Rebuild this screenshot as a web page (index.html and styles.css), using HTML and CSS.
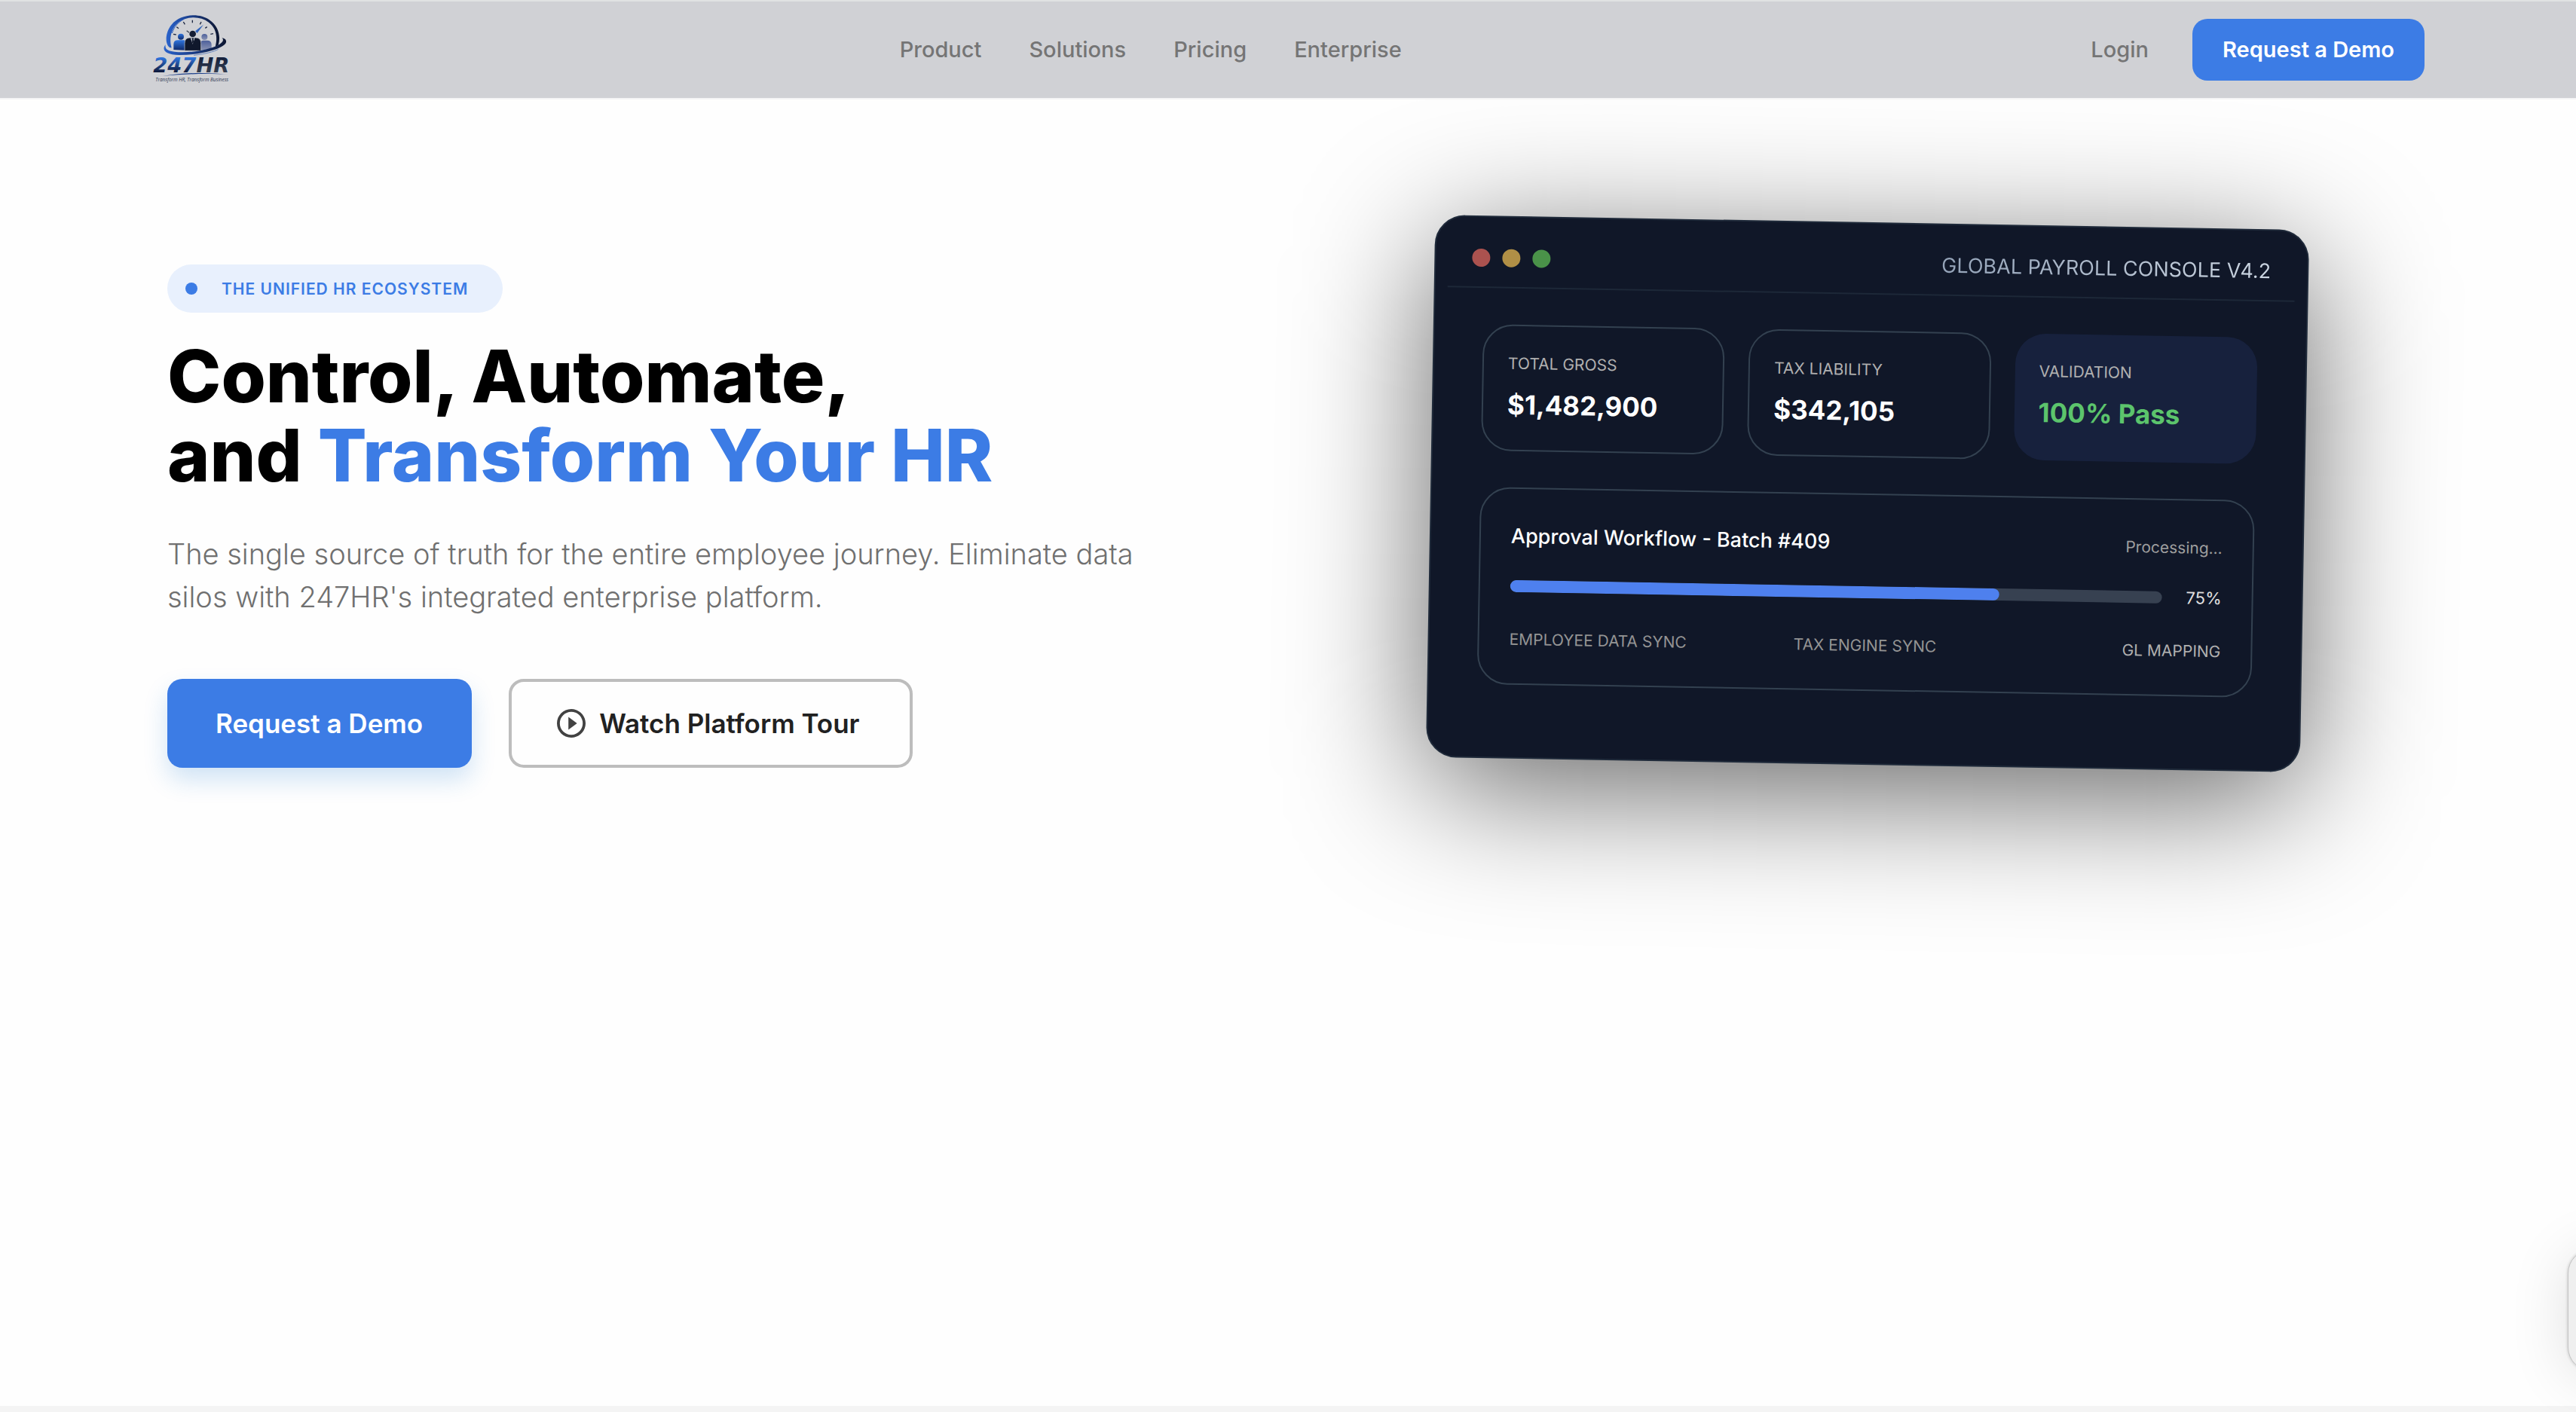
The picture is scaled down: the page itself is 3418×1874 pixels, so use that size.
FILE: index.html
```html
<!DOCTYPE html>
<html lang="en">
<head>
<meta charset="utf-8">
<meta name="viewport" content="width=device-width, initial-scale=1">
<title>247HR</title>
<link rel="stylesheet" href="styles.css">
</head>
<body>
<header class="site-header">
  <div class="site-header__inner">
    <a class="logo" href="#" aria-label="247HR home">
      <svg class="logo__art" viewBox="60 54 312 288" aria-hidden="true">
        <defs>
          <linearGradient id="domeFill" x1="0" y1="0" x2="1" y2="0">
            <stop offset="0" stop-color="#2a63cc"/><stop offset=".45" stop-color="#1b3f8c"/><stop offset="1" stop-color="#0c1530"/>
          </linearGradient>
          <linearGradient id="blueFill" x1="0" y1="0" x2="0" y2="1">
            <stop offset="0" stop-color="#2f74dd"/><stop offset="1" stop-color="#0f2a6b"/>
          </linearGradient>
          <linearGradient id="wordFill" x1="0" y1="0" x2="0" y2="1">
            <stop offset=".2" stop-color="#2f74dd"/><stop offset=".8" stop-color="#0e1a3c"/>
          </linearGradient>
          <linearGradient id="inkFill" x1="0" y1="0" x2="0" y2="1">
            <stop offset="0" stop-color="#0b1736"/><stop offset="1" stop-color="#3d4656"/>
          </linearGradient>
          <linearGradient id="greyFill" x1="0" y1="0" x2="0" y2="1">
            <stop offset="0" stop-color="#4c5f9b"/><stop offset="1" stop-color="#8b94b4"/>
          </linearGradient>
        </defs>
        <path fill="url(#domeFill)" d="M134 190C112 178 114 128 140 98C172 58 246 48 292 80C324 102 338 142 326 180L314 186C324 148 318 112 288 89C252 62 198 64 164 92C136 116 130 160 140 190Z"/>
        <path fill="none" stroke="#2c5fc0" stroke-width="3" d="M142 132C150 106 166 88 190 76"/>
        <g stroke="#1c2742" stroke-width="4" fill="none">
          <path d="M223 80V91M187 87L193 97M160 107L168 113M147 136L158 138M258 87L253 97M281 107L274 112M295 136L306 134"/>
          <path stroke="#3d4656" d="M200 122L210 130"/>
        </g>
        <path fill="#2f63bb" d="M267 98L242 132L234 124Z"/>
        <circle cx="177" cy="146" r="12" fill="url(#blueFill)"/>
        <path fill="url(#blueFill)" d="M148 198V176Q148 160 166 160H188Q196 160 196 172V200Z"/>
        <circle cx="271" cy="147" r="12" fill="url(#greyFill)"/>
        <path fill="url(#greyFill)" d="M254 200V172Q256 161 266 161H282Q299 161 299 178V194Z"/>
        <circle cx="224" cy="135" r="13" fill="#141d33"/>
        <path fill="#10182c" stroke="#d0d1d5" stroke-width="2" d="M192 202V172Q192 150 214 150H236Q257 150 257 172V202Z"/>
        <path fill="#c9ced8" d="M215 150L224 176L233 150L226 154H222Z"/>
        <path fill="#10182c" d="M222 153H227L228 168L224 174L221 168Z"/>
        <path fill="url(#domeFill)" d="M116 178C100 196 112 218 170 219C246 220 350 196 357 168C359 158 350 152 340 151C350 158 344 170 326 179C280 202 200 212 152 206C126 203 112 196 116 178Z"/>
        <path fill="none" stroke="#3460b5" stroke-width="2" d="M228 220C268 216 310 206 326 196"/>
        <text class="logo__word" x="67" y="287" fill="url(#wordFill)">247<tspan fill="url(#inkFill)">HR</tspan></text>
        <path fill="#1c3f8a" d="M104 303C190 288 290 288 369 297C290 292 190 294 104 303Z"/>
        <text class="logo__tag" x="76" y="325">Transform HR, Transform Business</text>
      </svg>
    </a>
    <nav class="nav" aria-label="Main">
      <a class="nav__link" href="#">Product</a>
      <a class="nav__link" href="#">Solutions</a>
      <a class="nav__link" href="#">Pricing</a>
      <a class="nav__link" href="#">Enterprise</a>
    </nav>
    <div class="actions">
      <a class="nav__link actions__login" href="#">Login</a>
      <button class="btn btn--small" type="button">Request a Demo</button>
    </div>
  </div>
</header>

<main class="main">
  <section class="hero">
    <div class="hero__copy">
      <p class="pill"><span class="pill__dot"></span>THE UNIFIED HR ECOSYSTEM</p>
      <h1 class="hero__title">Control, Automate,<br>and <span class="hero__accent">Transform Your HR</span></h1>
      <p class="hero__lead">The single source of truth for the entire employee journey. Eliminate data silos with 247HR's integrated enterprise platform.</p>
      <div class="hero__buttons">
        <button class="btn btn--large" type="button">Request a Demo</button>
        <button class="btn btn--outline" type="button">
          <svg class="btn__icon" viewBox="2 2 20 20" aria-hidden="true"><path fill="currentColor" d="M12 2C6.48 2 2 6.480 2 12s4.480 10 10 10 10-4.480 10-10S17.520 2 12 2zm0 18c-4.410 0-8-3.590-8-8s3.590-8 8-8 8 3.590 8 8-3.590 8-8 8zM10 16.500l6-4.500-6-4.500z"/></svg>
          Watch Platform Tour
        </button>
      </div>
    </div>

    <div class="showcase">
      <div class="console">
        <div class="console__bar">
          <span class="console__lights"><i class="light light--red"></i><i class="light light--amber"></i><i class="light light--green"></i></span>
          <span class="console__name">GLOBAL PAYROLL CONSOLE V4.2</span>
        </div>
        <div class="console__body">
          <div class="stats">
            <div class="stat"><span class="stat__label">TOTAL GROSS</span><strong class="stat__value">$1,482,900</strong></div>
            <div class="stat"><span class="stat__label">TAX LIABILITY</span><strong class="stat__value">$342,105</strong></div>
            <div class="stat stat--ok"><span class="stat__label">VALIDATION</span><strong class="stat__value">100% Pass</strong></div>
          </div>
          <div class="flow">
            <div class="flow__head"><span class="flow__title">Approval Workflow - Batch #409</span><span class="flow__state">Processing...</span></div>
            <div class="flow__progress">
              <div class="track" role="progressbar" aria-label="Approval Workflow" aria-valuenow="75" aria-valuemin="0" aria-valuemax="100"><div class="track__fill" style="width:75%"></div></div>
              <span class="flow__percent">75%</span>
            </div>
            <div class="flow__steps"><span>EMPLOYEE DATA SYNC</span><span>TAX ENGINE SYNC</span><span>GL MAPPING</span></div>
          </div>
        </div>
      </div>
    </div>
  </section>
</main>
<div class="next-section"></div>
<button class="side-tab" type="button" aria-label="Open panel"></button>
</body>
</html>
```
FILE: styles.css
```css
* { box-sizing: border-box; }

body {
  margin: 0;
  min-height: 100vh;
  display: flex;
  flex-direction: column;
  overflow-x: hidden;
  background: #fefefe;
  color: #000;
  font-family: Inter, "Liberation Sans", sans-serif;
}

p, h1 { margin: 0; }
button { font-family: inherit; cursor: pointer; }

/* Header */
.site-header {
  position: relative;
  z-index: 1;
  border-top: 2px solid #e0e2e2;
  border-bottom: 2px solid #f4f4f5;
  background: #d0d1d5;
}
.site-header__inner {
  max-width: 3016px;
  height: 128px;
  margin: 0 auto;
  display: flex;
  align-items: center;
  justify-content: space-between;
}
.logo { display: flex; }
.logo__art { width: 104px; height: 96px; }
.logo__word { font: italic 700 82px "DejaVu Sans", sans-serif; }
.logo__tag { font: italic 400 19px "Open Sans", sans-serif; fill: #2a3550; }
.nav { display: flex; gap: 63px; }
.nav__link {
  color: #757575;
  font-size: 29px;
  font-weight: 500;
  line-height: 48px;
  text-decoration: none;
}
.actions { display: flex; align-items: center; gap: 32px; }
.actions__login { padding: 0 26px; }

.btn {
  border: 0;
  border-radius: 20px;
  background: #3c7ce5;
  color: #fff;
  font-weight: 600;
  white-space: nowrap;
}
.btn--small { padding: 17px 40px; font-size: 29px; line-height: 48px; }
.btn--large, .btn--outline { height: 118px; font-size: 35px; }
.btn--large { padding: 0 65px 0 64px; box-shadow: 0 16px 32px rgba(25, 118, 210, .2); }
.btn--outline {
  display: flex;
  align-items: center;
  gap: 18px;
  padding: 0 66px 0 60px;
  border: 4px solid #bdbdbd;
  background: transparent;
  color: #212121;
}
.btn__icon { width: 38px; height: 38px; color: #424242; }

/* Hero */
.main { min-height: calc(100vh - 140px); }
.hero {
  max-width: 2974px;
  margin: 0 auto;
  padding-top: 163px;
  display: grid;
  grid-template-columns: 1fr 1fr;
  gap: 100px;
  align-items: start;
}
.hero__copy { padding-top: 56px; }
.pill {
  display: inline-flex;
  align-items: center;
  gap: 32px;
  height: 64px;
  padding: 0 46px 0 24px;
  border-radius: 32px;
  background: #e8f0fd;
  color: #3c7ce5;
  font-size: 21px;
  font-weight: 600;
  letter-spacing: 1px;
  vertical-align: top;
}
.pill__dot { width: 16px; height: 16px; border-radius: 50%; background: #3c7ce5; }
.hero__title {
  margin-top: 32px;
  font-size: 96px;
  font-weight: 800;
  line-height: 105px;
}
.hero__accent { color: #3c7ce5; }
.hero__lead {
  max-width: 1320px;
  margin-top: 50px;
  color: #707070;
  font-size: 38px;
  font-weight: 350;
  line-height: 57px;
}
.hero__buttons { display: flex; gap: 49px; margin-top: 80px; }

/* Console card, tilted together with its soft shadow */
.showcase {
  position: relative;
  width: 1160px;
  justify-self: center;
  transform: rotate(1deg);
}
.showcase::before {
  content: "";
  position: absolute;
  inset: 38px 0 -38px;
  border-radius: 40px;
  background: rgba(0, 0, 0, .6);
  filter: blur(90px);
}
.console {
  position: relative;
  padding: 16px 16px 48px;
  border: 2px solid #1f2a3a;
  border-radius: 40px;
  background: #101728;
}
.console__bar {
  height: 78px;
  padding: 0 32px;
  display: flex;
  align-items: center;
  justify-content: space-between;
  border-bottom: 2px solid #1d2838;
}
.console__lights { display: flex; gap: 16px; }
.light { width: 24px; height: 24px; border-radius: 50%; }
.light--red { background: #ab524f; }
.light--amber { background: #b08f46; }
.light--green { background: #4a9249; }
.console__name {
  font-size: 27px;
  line-height: 40px;
  background: linear-gradient(90deg, #94a3b8, #cbd5e1);
  background-clip: text;
  -webkit-background-clip: text;
  color: transparent;
}
.console__body { padding: 48px; display: grid; gap: 48px; }
.stats { display: grid; grid-template-columns: repeat(3, 1fr); gap: 32px; }
.stat {
  display: flex;
  flex-direction: column;
  gap: 8px;
  padding: 32px;
  border: 2px solid #334150;
  border-radius: 40px;
}
.stat__label { color: #b0b0b0; font-size: 21px; line-height: 36px; }
.stat__value { color: #fff; font-size: 35px; font-weight: 700; line-height: 56px; }
.stat--ok { border: 0; background: #17213d; }
.stat--ok .stat__value { color: #5cc46c; }
.flow { padding: 40px; border: 2px solid #334150; border-radius: 40px; }
.flow__head, .flow__progress { display: flex; align-items: center; justify-content: space-between; }
.flow__title { color: #fff; font-size: 27px; font-weight: 500; line-height: 46px; }
.flow__state { color: #9e9e9e; font-size: 21px; line-height: 36px; }
.flow__progress { margin-top: 24px; gap: 32px; }
.track { flex: 1; height: 16px; border-radius: 8px; background: #374151; overflow: hidden; }
.track__fill { height: 100%; border-radius: 8px; background: #4e80ee; }
.flow__percent { color: #e0e0e0; font-size: 22px; line-height: 38px; }
.flow__steps {
  margin-top: 34px;
  display: grid;
  grid-template-columns: repeat(3, 1fr);
  color: #949494;
  font-size: 21px;
  line-height: 36px;
}
.flow__steps span:nth-child(2) { text-align: center; }
.flow__steps span:nth-child(3) { text-align: right; color: #b0b0b0; }

.next-section { flex: 1; min-height: 8px; background: #f4f4f4; }

/* Tab that peeks in from the right edge of the window */
.side-tab {
  position: fixed;
  right: -149px;
  bottom: 54px;
  width: 160px;
  height: 162px;
  border: 1px solid #c4c4c4;
  border-radius: 32px;
  background: #efefef;
  box-shadow: 0 0 4px rgba(0, 0, 0, .2), 0 8px 80px rgba(0, 0, 0, .12);
}
```
